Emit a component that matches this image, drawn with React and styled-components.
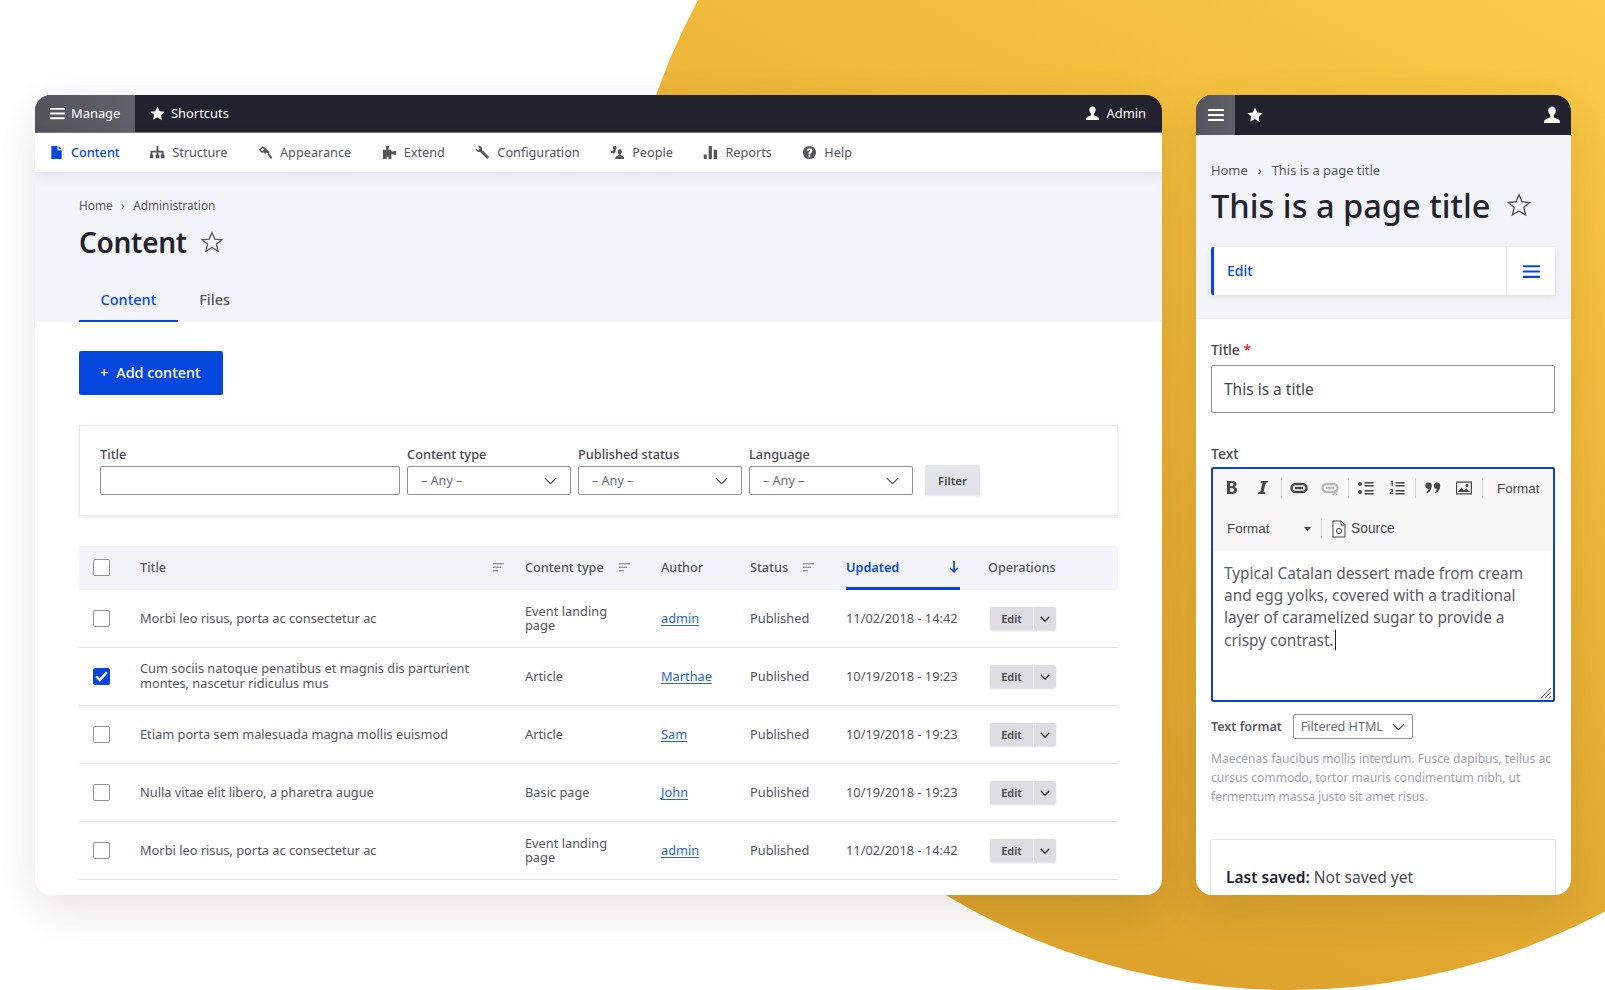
import React from 'react'
import styled, { createGlobalStyle } from 'styled-components'

const GlobalStyle = createGlobalStyle`
  html, body { margin: 0; padding: 0; background: #fff; }
  body { font-family: "Noto Sans", "Open Sans", Arial, sans-serif; color: #55565b; }
  * { box-sizing: border-box; }
`

const BLUE = '#0547dc'
const DARK = '#22222e'

const Page = styled.div`
  position: relative;
  width: 1605px;
  height: 990px;
  overflow: hidden;
  background: #fff;
`
const Sun = styled.div`
  position: absolute;
  left: 618px;
  top: -354px;
  width: 1344px;
  height: 1344px;
  border-radius: 50%;
  background: linear-gradient(208deg, #fbce49 24%, #f4bf3d 42%, #e9b035 62%, #dda32d 84%);
`
const Windows = styled.div`
  position: relative;
  display: flex;
  gap: 34px;
  padding: 95px 0 0 35px;
`
const Frame = styled.div`
  width: ${p => p.$width}px;
  height: 800px;
  background: #fff;
  border-radius: 16px;
  overflow: hidden;
  box-shadow: 0 14px 44px rgba(40, 30, 10, 0.12);
`
const TopBar = styled.div`
  display: flex;
  align-items: stretch;
  height: ${p => p.$height}px;
  background: ${DARK};
  color: #fff;
  font-size: 12.9px;
  border-bottom: ${p => (p.$line ? '1px solid #7d7e86' : '0')};
`
const TopTab = styled.div`
  display: flex;
  align-items: center;
  gap: 6px;
  padding: ${p => p.$pad};
  width: ${p => p.$width || 'auto'};
  background: ${p => (p.$active ? 'linear-gradient(90deg, #53545c, #5f6068)' : 'transparent')};
`
const Spacer = styled.div`
  flex: 1;
`
const NavBar = styled.div`
  position: relative;
  display: flex;
  align-items: center;
  gap: 30.5px;
  height: 39px;
  padding: 0 0 1px 14px;
  background: #fff;
  box-shadow: 0 3px 12px rgba(30, 30, 50, 0.09);
`
const NavItem = styled.div`
  display: flex;
  align-items: center;
  gap: 7px;
  font-size: 12.7px;
  font-weight: ${p => (p.$active ? 500 : 400)};
  color: ${p => (p.$active ? BLUE : '#55565b')};
`
const PageHead = styled.div`
  background: #f3f4f9;
  padding: ${p => p.$pad};
`
const Crumbs = styled.div`
  display: flex;
  align-items: center;
  gap: ${p => p.$gap}px;
  font-size: ${p => p.$size}px;
  line-height: 18px;
  color: #55565b;
`
const TitleRow = styled.div`
  display: flex;
  align-items: center;
  gap: ${p => p.$gap}px;
  margin-top: ${p => p.$top}px;
  height: ${p => p.$height}px;
`
const PageTitle = styled.h1`
  margin: 0;
  font-size: ${p => p.$size}px;
  font-weight: ${p => p.$weight};
  letter-spacing: ${p => p.$track}px;
  color: ${DARK};
`
const Tabs = styled.div`
  display: flex;
  margin-top: 15px;
`
const TabItem = styled.div`
  display: flex;
  align-items: center;
  height: 44px;
  padding: 0 21.5px;
  font-size: 14.5px;
  font-weight: 500;
  color: ${p => (p.$active ? BLUE : '#55565b')};
  border-bottom: 2px solid ${p => (p.$active ? BLUE : 'transparent')};
`
const Body = styled.div`
  padding: 29px 44px 0;
`
const AddButton = styled.div`
  display: flex;
  align-items: center;
  gap: 8px;
  width: 144px;
  height: 44px;
  padding: 0 0 2px 21px;
  border-radius: 2px;
  background: ${BLUE};
  color: #fff;
  font-size: 14.4px;
  font-weight: 500;
`
const FilterCard = styled.div`
  display: flex;
  align-items: flex-end;
  gap: 7px;
  height: 91px;
  margin-top: 30px;
  padding: 19px 20px 20px;
  border: 1px solid #ebebed;
  box-shadow: 0 1px 4px rgba(0, 0, 0, 0.12);
`
const FieldWrap = styled.div`
  display: flex;
  flex-direction: column;
  gap: 4px;
  width: ${p => p.$width}px;
`
const Label = styled.div`
  font-size: 12.8px;
  line-height: 16px;
  font-weight: 500;
  color: #46474c;
`
const Select = styled.div`
  display: flex;
  align-items: center;
  justify-content: space-between;
  width: ${p => p.$width || '100%'};
  height: ${p => p.$height}px;
  padding: 0 ${p => p.$right}px 0 ${p => p.$left}px;
  background: #fff;
  border: 1px solid #8f9199;
  border-radius: 2px;
  font-size: 12.6px;
  font-weight: 400;
  color: #6b6c72;
`
const FilterButton = styled.div`
  display: flex;
  align-items: center;
  justify-content: center;
  width: 55px;
  height: 30px;
  margin-left: 5px;
  background: #e3e4e9;
  border-radius: 2px;
  box-shadow: 0 1px 2px rgba(0, 0, 0, 0.12);
  font-size: 11.5px;
  font-weight: 600;
  color: #46474c;
`
const Grid = styled.div`
  display: grid;
  grid-template-columns: 61px 385px 136px 89px 96px 142px 1fr;
  align-items: center;
  height: ${p => p.$height}px;
  font-size: 12.8px;
`
const HeadRow = styled(Grid)`
  margin-top: 30px;
  background: #f3f4f9;
  font-size: 12.7px;
  font-weight: 500;
  color: #55565b;
`
const Row = styled(Grid)`
  padding-bottom: 1px;
  border-bottom: 1px solid #e4e5e8;
`
const Check = styled.div`
  display: flex;
  align-items: center;
  justify-content: center;
  width: 17px;
  height: 17px;
  margin-left: 14px;
  border-radius: 2px;
  border: 1.5px solid ${p => (p.$on ? BLUE : '#92949c')};
  background: ${p => (p.$on ? BLUE : '#fff')};
`
const HeadCheck = styled(Check)`
  margin-bottom: 2px;
`
const HeadCell = styled.div`
  display: flex;
  align-items: center;
  gap: 15px;
  height: 100%;
  padding-bottom: 2px;
  justify-content: ${p => (p.$split ? 'space-between' : 'flex-start')};
  width: ${p => p.$width || 'auto'};
`
const SortedCell = styled(HeadCell)`
  color: ${BLUE};
  font-weight: 600;
  border-bottom: 3px solid ${BLUE};
  padding: 1px 1px 0 0;
`
const TitleCell = styled.div`
  width: 345px;
  line-height: 15px;
`
const TypeCell = styled.div`
  width: 92px;
  line-height: 14px;
`
const AuthorLink = styled.span`
  color: #2a63d4;
  text-decoration: underline;
  text-underline-offset: 2px;
`
const EditGroup = styled.div`
  display: flex;
  width: 66px;
  height: 23px;
  margin: 1px 0 0 2px;
  background: #dcdde2;
  border-radius: 2px;
  box-shadow: 0 1px 2px rgba(0, 0, 0, 0.12);
`
const EditLabel = styled.div`
  display: flex;
  align-items: center;
  justify-content: center;
  width: 44px;
  font-size: 11px;
  font-weight: 600;
  color: #46474c;
  border-right: 1px solid #f2f2f5;
`
const EditCaret = styled.div`
  flex: 1;
  display: flex;
  align-items: center;
  justify-content: center;
`

const ActionBar = styled.div`
  display: flex;
  height: 48px;
  margin-top: 20px;
  background: #fff;
  border-left: 3px solid ${BLUE};
  border-radius: 2px;
  box-shadow: 0 2px 6px rgba(30, 30, 50, 0.1);
`
const ActionEdit = styled.div`
  flex: 1;
  display: flex;
  align-items: center;
  padding: 0 0 1px 13px;
  font-size: 14px;
  font-weight: 500;
  color: ${BLUE};
`
const ActionMenu = styled.div`
  display: flex;
  align-items: center;
  justify-content: center;
  width: 49px;
  border-left: 1px solid #e8e8ea;
`
const FormBody = styled.div`
  padding: 21px 16px 0 15px;
`
const FormLabel = styled.div`
  margin-top: ${p => p.$top}px;
  font-size: 14px;
  line-height: 20px;
  font-weight: 500;
  color: #46474c;
`
const Required = styled.span`
  color: #d2202f;
`
const TextInput = styled.div`
  display: flex;
  align-items: center;
  height: 48px;
  margin-top: 5px;
  padding-left: 12px;
  border: 1px solid #8f9199;
  border-radius: 2px;
  font-size: 15.5px;
  color: #46474c;
`
const Editor = styled.div`
  position: relative;
  height: 235px;
  margin-top: 3px;
  border: 2px solid #0b45c4;
  border-radius: 2px;
`
const EditorTools = styled.div`
  height: 82px;
  background: #f7f7f7;
`
const ToolRow = styled.div`
  display: flex;
  align-items: center;
  height: ${p => p.$height}px;
  padding-left: 4px;
`
const Tool = styled.div`
  display: flex;
  align-items: center;
  justify-content: center;
  width: 30.5px;
  height: 24px;
  color: #474747;
`
const ToolSep = styled.div`
  width: 1px;
  height: 20px;
  margin: 0 ${p => p.$space}px;
  background: #d4d4d4;
`
const CkText = styled.div`
  font-family: "Liberation Sans", Arial, sans-serif;
  font-size: 13.4px;
  color: #474747;
`
const CkLabel = styled(CkText)`
  margin-left: 12px;
`
const FormatCombo = styled(CkText)`
  display: flex;
  align-items: center;
  justify-content: space-between;
  width: 94px;
  padding: 0 0 0 10px;
`
const SourceButton = styled(CkText)`
  display: flex;
  align-items: center;
  gap: 5px;
  font-size: 13.8px;
`
const EditorText = styled.div`
  padding: 12px 10px 0 11px;
  font-size: 15.4px;
  line-height: 22.2px;
  color: #5b5c61;
`
const Caret = styled.span`
  display: inline-block;
  width: 1.5px;
  height: 20px;
  margin-left: 1px;
  vertical-align: -4px;
  background: #222;
`
const Grip = styled.svg`
  position: absolute;
  right: 1px;
  bottom: 1px;
`
const FormatRow = styled.div`
  display: flex;
  align-items: center;
  gap: 11px;
  margin-top: 12px;
  font-size: 12.5px;
  font-weight: 600;
  color: #5b5c61;
`
const Help = styled.div`
  margin-top: 10px;
  font-size: 12.05px;
  line-height: 19px;
  color: #a1a2a9;
`
const SavedCard = styled.div`
  height: 80px;
  margin: 33px -1px 0 -1px;
  padding: 26px 15px;
  border: 1px solid #e4e5e8;
  border-radius: 2px;
  font-size: 15.5px;
  line-height: 22px;
  color: #46474c;
`
const SavedKey = styled.b`
  font-weight: 600;
  color: ${DARK};
`

// icons
const Burger = ({ size = 15, color = '#fff' }) => (
  <svg width={size} height={size} viewBox="0 0 16 16" fill={color}>
    <rect x="0" y="2" width="16" height="2" rx=".6" />
    <rect x="0" y="7" width="16" height="2" rx=".6" />
    <rect x="0" y="12" width="16" height="2" rx=".6" />
  </svg>
)
const StarFill = ({ size = 15 }) => (
  <svg width={size} height={size} viewBox="0 0 16 16" fill="#fff">
    <path d="M8 .6l2.3 4.9 5.3.7-3.9 3.7 1 5.4L8 12l-4.7 2.6 1-5.4L.4 6.2l5.300-.7z" />
  </svg>
)
const StarLine = ({ size = 22 }) => (
  <svg width={size} height={size} viewBox="0 0 24 24" fill="none" stroke="#55565b" strokeWidth="1.4" strokeLinejoin="miter">
    <path d="M12 1.8l3 7 7.6.7-5.8 5 1.8 7.4L12 18l-6.6 3.900 1.800-7.400-5.800-5L9 8.800z" />
  </svg>
)
const User = ({ size = 15 }) => (
  <svg width={size} height={size} viewBox="0 0 16 16" fill="#fff">
    <path d="M8 .5c2.1 0 3.300 1.500 3.300 3.500 0 1.700-.8 3.300-1.700 4.100v1.400c0 .6 1 1 2.200 1.500 1.500.6 3.200 1.100 3.200 2.500v1.500H1v-1.500c0-1.400 1.700-1.900 3.200-2.500 1.200-.5 2.200-.9 2.200-1.500V8.100C5.500 7.300 4.700 5.700 4.700 4 4.700 2 5.900.5 8 .5z" />
  </svg>
)
const navIcons = {
  content: <path d="M2.5 1H9v4.500h4.500V15h-11zM10.200 1l3.300 3.300h-3.300z" />,
  structure: <path d="M7 1h2v5h5.500v4h1v4h-4v-4h1V8H9v2h1v4H6v-4h1V8H2.500v2h1v4h-4v-4h1V6H7z" />,
  appearance: <path fillRule="evenodd" d="M5 1.200L7.500 3l5 4.700-1.700 1.700-1.400-1.300-1.600 1.600L6.200 8 3.800 8.300.8 5zM5 3.300L3 5.100l1.500 1.500 2.200-1.700zM10.300 10l1.300-1.300 3.600 4.700-1.500 1.400z" />,
  extend: <path d="M1 5h3.500V3.500L4 2.800V1h3.500v1.800L7 3.500V5h3v2h1.600l.9-.6H15v4h-2.500l-.9-.6H10V15H7v-2.500H5V15H1z" />,
  configuration: <path d="M4.300.8c1.700 0 3.200 1.500 3.200 3.200 0 .4-.1.800-.2 1.100l7.900 7.700-2.200 2.200L5.300 7.300c-.3.1-.7.200-1 .2C2.400 7.500.8 5.900 1 4l2.300 1.600L5 4 3.300 1c.3-.1.700-.2 1-.2z" />,
  people: <path d="M10.300 4.500c1.400 0 2.300 1 2.300 2.400 0 1.100-.5 2.100-1.200 2.700v1c0 .8 3.600 1.100 3.600 2.900V15H5.800v-1.500c0-1.800 3.600-2.100 3.600-2.900v-1c-.7-.6-1.200-1.600-1.200-2.700 0-1.400.9-2.400 2.100-2.400zM5 .8c1.200 0 2 .9 2 2.100 0 .5-.1 1-.3 1.400-.5.600-.8 1.500-.8 2.500v.8c-.2.400-2.500 1-2.900 2V8.500H1v-1c0-1.200 2.800-1.400 2.800-2.100V4.800C3.300 4.300 3 3.700 3 2.900 3 1.700 3.800.8 5 .8z" />,
  reports: <path d="M.8 10H4v5H.8zM6 1h3.500v14H6zM11.500 5H15v10h-3.500z" />,
  help: <path fillRule="evenodd" d="M8 1a7 7 0 1 1 0 14A7 7 0 0 1 8 1zM7 11v2h2v-2zM8 3.500c-1.700 0-2.800 1-2.900 2.500H7c.1-.6.400-.9 1-.9s.9.300.9.800c0 1-1.900 1.300-1.900 3.100V10h2v-.4c0-1.200 2-1.500 2-3.700 0-1.500-1.200-2.400-3-2.400z" />
}
const NavIcon = ({ name, color = '#55565b' }) => (
  <svg width="15" height="15" viewBox="0 0 16 16" fill={color}>{navIcons[name]}</svg>
)
const Chevron = ({ width = 13, stroke = 1.4, color = '#55565b' }) => (
  <svg width={width} height={width * 0.6} viewBox="0 0 14 8" fill="none" stroke={color} strokeWidth={stroke}>
    <path d="M1 1l6 6 6-6" />
  </svg>
)
const SortIcon = () => (
  <svg width="11" height="9" viewBox="0 0 11 9" fill="#9a9ca4">
    <rect width="11" height="1.5" />
    <rect y="3.5" width="8" height="1.5" />
    <rect y="7" width="5" height="1.5" />
  </svg>
)
const ArrowDown = () => (
  <svg width="10" height="12" viewBox="0 0 10 12" fill="none" stroke={BLUE} strokeWidth="1.7">
    <path d="M5 0v10.500M1.200 7L5 10.800 8.800 7" />
  </svg>
)
const Tick = () => (
  <svg width="13" height="11" viewBox="0 0 13 11" fill="none" stroke="#fff" strokeWidth="2.4">
    <path d="M1.200 5.500l3.600 3.500 7-7.800" />
  </svg>
)
const ToolIcon = ({ children }) => (
  <svg width="18" height="18" viewBox="0 0 18 18" fill="currentColor">{children}</svg>
)
const LinkGlyph = ({ color = '#474747', broken }) => (
  <svg width="18" height="18" viewBox="0 0 18 18" fill="none" stroke={color}>
    <rect x="1.5" y="5" width="15" height="8" rx="4" strokeWidth="2.4" />
    <path d="M5 9h8" strokeWidth="2.4" />
    {broken && <path d="M12 12l4 4m0-4l-4 4" strokeWidth="1.3" />}
  </svg>
)
const ListLines = () => (
  <>
    <rect x="7.5" y="3" width="9" height="1.5" />
    <rect x="7.5" y="6" width="9" height="1.5" />
    <rect x="7.5" y="11" width="9" height="1.5" />
    <rect x="7.5" y="14" width="9" height="1.5" />
  </>
)

const navItems = [
  ['content', 'Content'],
  ['structure', 'Structure'],
  ['appearance', 'Appearance'],
  ['extend', 'Extend'],
  ['configuration', 'Configuration'],
  ['people', 'People'],
  ['reports', 'Reports'],
  ['help', 'Help']
]
const rows = [
  { title: 'Morbi leo risus, porta ac consectetur ac', type: 'Event landing page', author: 'admin', date: '11/02/2018 - 14:42' },
  { title: 'Cum sociis natoque penatibus et magnis dis parturient montes, nascetur ridiculus mus', type: 'Article', author: 'Marthae', date: '10/19/2018 - 19:23', checked: true },
  { title: 'Etiam porta sem malesuada magna mollis euismod', type: 'Article', author: 'Sam', date: '10/19/2018 - 19:23' },
  { title: 'Nulla vitae elit libero, a pharetra augue', type: 'Basic page', author: 'John', date: '10/19/2018 - 19:23' },
  { title: 'Morbi leo risus, porta ac consectetur ac', type: 'Event landing page', author: 'admin', date: '11/02/2018 - 14:42' }
]
const filters = [
  ['Content type', 164],
  ['Published status', 164],
  ['Language', 164]
]

const DesktopWindow = () => (
  <Frame $width={1127}>
    <TopBar $height={38} $line>
      <TopTab $active $width="100px" $pad="0 0 1px 15px"><Burger />Manage</TopTab>
      <TopTab $pad="0 0 1px 15px"><StarFill />Shortcuts</TopTab>
      <Spacer />
      <TopTab $pad="0 16px 1px 0"><User />Admin</TopTab>
    </TopBar>
    <NavBar>
      {navItems.map(([icon, label], i) => (
        <NavItem key={label} $active={i === 0}>
          <NavIcon name={icon} color={i === 0 ? BLUE : '#55565b'} />
          {label}
        </NavItem>
      ))}
    </NavBar>
    <PageHead $pad="24px 44px 0">
      <Crumbs $gap={8.5} $size={11.8}>Home<span>›</span>Administration</Crumbs>
      <TitleRow $top={7} $height={42} $gap={14}>
        <PageTitle $size={28} $weight={600} $track={-0.3}>Content</PageTitle>
        <StarLine />
      </TitleRow>
      <Tabs>
        <TabItem $active>Content</TabItem>
        <TabItem>Files</TabItem>
      </Tabs>
    </PageHead>
    <Body>
      <AddButton><span>+</span>Add content</AddButton>
      <FilterCard>
        <FieldWrap $width={300}>
          <Label>Title</Label>
          <Select $height={29} $left={13} $right={13} />
        </FieldWrap>
        {filters.map(([label, width]) => (
          <FieldWrap key={label} $width={width}>
            <Label>{label}</Label>
            <Select $height={29} $left={13} $right={13}>– Any –<Chevron /></Select>
          </FieldWrap>
        ))}
        <FilterButton>Filter</FilterButton>
      </FilterCard>
      <HeadRow $height={44}>
        <HeadCheck />
        <HeadCell $split $width="364px">Title<SortIcon /></HeadCell>
        <HeadCell>Content type<SortIcon /></HeadCell>
        <HeadCell>Author</HeadCell>
        <HeadCell>Status<SortIcon /></HeadCell>
        <SortedCell $split $width="114px">Updated<ArrowDown /></SortedCell>
        <HeadCell>Operations</HeadCell>
      </HeadRow>
      {rows.map(row => (
        <Row key={row.title + row.date} $height={58}>
          <Check $on={row.checked}>{row.checked && <Tick />}</Check>
          <TitleCell>{row.title}</TitleCell>
          <TypeCell>{row.type}</TypeCell>
          <div><AuthorLink>{row.author}</AuthorLink></div>
          <div>Published</div>
          <div>{row.date}</div>
          <EditGroup>
            <EditLabel>Edit</EditLabel>
            <EditCaret><Chevron width={10} stroke={2} color="#33343a" /></EditCaret>
          </EditGroup>
        </Row>
      ))}
    </Body>
  </Frame>
)

const MobileWindow = () => (
  <Frame $width={375}>
    <TopBar $height={40}>
      <TopTab $active $width="39px" $pad="0 0 0 12px"><Burger size={16} /></TopTab>
      <TopTab $pad="0 0 0 12px"><StarFill size={16} /></TopTab>
      <Spacer />
      <TopTab $pad="0 10px 0 0"><User size={18} /></TopTab>
    </TopBar>
    <PageHead $pad="26px 16px 24px 15px">
      <Crumbs $gap={10} $size={12.9}>Home<span>›</span>This is a page title</Crumbs>
      <TitleRow $top={4} $height={44} $gap={16}>
        <PageTitle $size={32.6} $weight={500} $track={0}>This is a page title</PageTitle>
        <StarLine size={24} />
      </TitleRow>
      <ActionBar>
        <ActionEdit>Edit</ActionEdit>
        <ActionMenu><Burger size={17} color={BLUE} /></ActionMenu>
      </ActionBar>
    </PageHead>
    <FormBody>
      <FormLabel $top={0}>Title <Required>*</Required></FormLabel>
      <TextInput>This is a title</TextInput>
      <FormLabel $top={31}>Text</FormLabel>
      <Editor>
        <EditorTools>
          <ToolRow $height={38}>
            <Tool><ToolIcon><path d="M4 2h5.500c2.500 0 4 1.200 4 3.200 0 1.300-.8 2.300-2 2.700 1.600.3 2.700 1.500 2.700 3.200 0 2.300-1.800 3.900-4.500 3.900H4zm3 2.300v2.900h2c1 0 1.500-.6 1.500-1.500S10 4.300 9 4.300zm0 5v3.400h2.300c1.200 0 1.900-.7 1.900-1.700s-.7-1.700-1.900-1.700z" /></ToolIcon></Tool>
            <Tool><ToolIcon><path d="M7 2h7l-.4 1.800h-1.800L9.500 13h1.800l-.4 2H4l.4-2h1.800L8.500 3.800H6.600z" /></ToolIcon></Tool>
            <ToolSep $space={2.5} />
            <Tool><LinkGlyph /></Tool>
            <Tool><LinkGlyph color="#b8b8b8" broken /></Tool>
            <ToolSep $space={2.5} />
            <Tool><ToolIcon><circle cx="3" cy="5" r="2" /><circle cx="3" cy="13" r="2" /><ListLines /></ToolIcon></Tool>
            <Tool><ToolIcon><path d="M2.500 2.500l1.500-.8h.8v5.300H3.500V3.200zM1.500 10.500c1.500-1 3.700-.7 3.700.9 0 1.200-1.500 1.800-2.200 2.600h2.300v1H1.500v-1c1-1 2.400-1.700 2.400-2.500 0-.7-1.400-.5-2.400.1z" /><ListLines /></ToolIcon></Tool>
            <ToolSep $space={2.5} />
            <Tool><ToolIcon><path d="M4.500 3.500a3.200 3.200 0 0 1 3.200 3.400c0 3.400-2 6.300-4.700 7.400l-.8-1.100c1.300-.8 2.200-1.800 2.500-3.200a3.200 3.200 0 0 1-.2-6.500zM13 3.500a3.200 3.200 0 0 1 3.200 3.400c0 3.400-2 6.300-4.700 7.400l-.8-1.100c1.300-.8 2.200-1.800 2.500-3.200a3.200 3.200 0 0 1-.2-6.500z" /></ToolIcon></Tool>
            <Tool><ToolIcon><path fillRule="evenodd" d="M1 2.500h16v13H1zM2.200 3.700v10.600h13.600V3.700z" /><path d="M3 13l3.500-4.500 2.500 3 2.500-2 3.500 3.500z" /><circle cx="12" cy="6.500" r="1.400" /></ToolIcon></Tool>
            <ToolSep $space={2.5} />
            <CkLabel>Format</CkLabel>
          </ToolRow>
          <ToolRow $height={43}>
            <FormatCombo>
              Format
              <svg width="7" height="4" viewBox="0 0 7 4" fill="#474747"><path d="M0 0h7L3.500 4z" /></svg>
            </FormatCombo>
            <ToolSep $space={10} />
            <SourceButton>
              <svg width="14" height="18" viewBox="0 0 14 18" fill="none" stroke="#474747" strokeWidth="1">
                <path d="M1 1h8l4 4v12H1zM9 1v4h4" />
                <circle cx="7" cy="11" r="2.600" />
              </svg>
              Source
            </SourceButton>
          </ToolRow>
        </EditorTools>
        <EditorText>
          Typical Catalan dessert made from cream and egg yolks, covered with a traditional layer of caramelized sugar to provide a crispy contrast.<Caret />
        </EditorText>
        <Grip width="12" height="12" viewBox="0 0 12 12" stroke="#55565b" strokeWidth="1">
          <path d="M1 11L11 1M5 11l6-6M9 11l2-2" />
        </Grip>
      </Editor>
      <FormatRow>
        Text format
        <Select $width="120px" $height={25} $left={7} $right={7}>Filtered HTML<Chevron /></Select>
      </FormatRow>
      <Help>
        Maecenas faucibus mollis interdum. Fusce dapibus, tellus ac cursus commodo, tortor mauris condimentum nibh, ut fermentum massa justo sit amet risus.
      </Help>
      <SavedCard><SavedKey>Last saved:</SavedKey> Not saved yet</SavedCard>
    </FormBody>
  </Frame>
)

export default function App() {
  return (
    <Page>
      <GlobalStyle />
      <Sun />
      <Windows>
        <DesktopWindow />
        <MobileWindow />
      </Windows>
    </Page>
  )
}
